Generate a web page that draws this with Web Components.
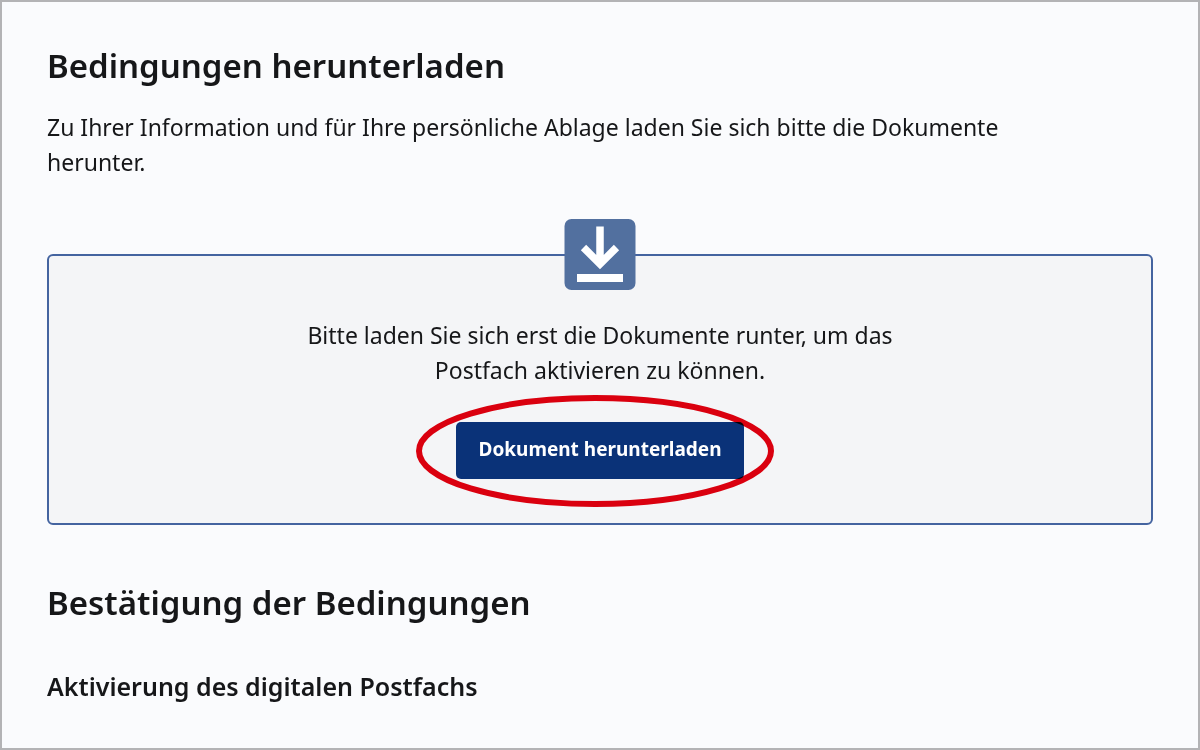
<!DOCTYPE html>
<html lang="de">
<head>
<meta charset="utf-8">
<meta name="viewport" content="width=device-width, initial-scale=1">
<title>Bedingungen herunterladen</title>
<style>
  html, body { margin: 0; background: #fafbfd; }
  body { color: #161719; font-family: "Noto Sans", "Open Sans", sans-serif; }
</style>
</head>
<body>
<terms-page>
  <terms-section heading="Bedingungen herunterladen">
    <p>Zu Ihrer Information und für Ihre persönliche Ablage laden Sie sich bitte die Dokumente herunter.</p>
    <download-panel>
      Bitte laden Sie sich erst die Dokumente runter, um das Postfach aktivieren zu können.
      <marked-button slot="action">Dokument herunterladen</marked-button>
    </download-panel>
  </terms-section>
  <terms-section heading="Bestätigung der Bedingungen">
    <h3>Aktivierung des digitalen Postfachs</h3>
  </terms-section>
</terms-page>
<script>
const define = (name, html) => customElements.define(name, class extends HTMLElement {
  constructor() {
    super();
    this.attachShadow({ mode: "open" }).innerHTML = html;
  }
  connectedCallback() {
    const h = this.shadowRoot.querySelector("[data-heading]");
    if (h) h.textContent = this.getAttribute("heading");
  }
});

define("terms-page", `
<style>
  :host { display: block; box-sizing: border-box; min-height: 100vh; border: 2px solid #b3b3b5; padding: 40px 45px; }
  main { display: flex; flex-direction: column; gap: 54px; }
</style>
<main><slot></slot></main>`);

define("terms-section", `
<style>
  :host { display: block; }
  h2 { margin: 0; font-size: 33px; line-height: 48px; font-weight: 600; }
  ::slotted(p) { margin: 20px 0 0; max-width: 980px; font-size: 23px; line-height: 35px; }
  ::slotted(h3) { margin: 41px 0 0; font-size: 25px; line-height: 36px; font-weight: 600; }
</style>
<section><h2 data-heading></h2><slot></slot></section>`);

define("download-icon", `
<style>:host { display: block; width: 72px; height: 71px; } svg { display: block; width: 100%; height: 100%; }</style>
<svg viewBox="0 0 72 71" aria-hidden="true">
  <rect x="0.5" width="71" height="71" rx="7" fill="#52709f"/>
  <path d="M36 7.5V45M19.5 28.5L36 45L52.5 28.5" fill="none" stroke="#fff" stroke-width="7.5"/>
  <rect x="13" y="55" width="46" height="8" fill="#fff"/>
</svg>`);

define("download-panel", `
<style>
  :host { display: block; margin-top: 74px; }
  .box { display: flex; flex-direction: column; align-items: center; border: 2px solid #4464a0; border-radius: 6px; background: #f4f5f7; padding: 0 24px 44px; }
  download-icon { margin-top: -37px; }
  .text { margin: 28px 0 34px; max-width: 600px; text-align: center; font-size: 23px; line-height: 35px; }
</style>
<div class="box">
  <download-icon></download-icon>
  <div class="text"><slot></slot></div>
  <slot name="action"></slot>
</div>`);

define("marked-button", `
<style>
  :host { display: block; position: relative; }
  button { display: block; border: 0; border-radius: 5px; background: #0a3278; color: #fff; padding: 13px 22px 16px; font: 700 19px/28px "Noto Sans", sans-serif; cursor: pointer; }
  svg { position: absolute; left: -40px; top: -28px; width: 360px; height: 114px; pointer-events: none; mix-blend-mode: multiply; }
</style>
<button type="button"><slot></slot></button>
<svg viewBox="0 0 360 114" aria-hidden="true"><ellipse cx="179" cy="57" rx="176" ry="53" fill="none" stroke="#e4000f" stroke-width="6"/></svg>`);
</script>
</body>
</html>
